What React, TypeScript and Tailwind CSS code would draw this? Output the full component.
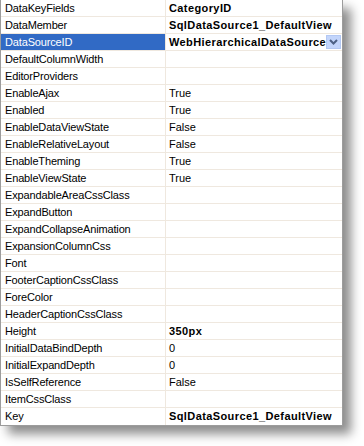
const rows: { name: string; value?: string; bold?: boolean }[] = [
  { name: "DataKeyFields", value: "CategoryID", bold: true },
  { name: "DataMember", value: "SqlDataSource1_DefaultView", bold: true },
  { name: "DataSourceID", value: "WebHierarchicalDataSource1", bold: true },
  { name: "DefaultColumnWidth" },
  { name: "EditorProviders" },
  { name: "EnableAjax", value: "True" },
  { name: "Enabled", value: "True" },
  { name: "EnableDataViewState", value: "False" },
  { name: "EnableRelativeLayout", value: "False" },
  { name: "EnableTheming", value: "True" },
  { name: "EnableViewState", value: "True" },
  { name: "ExpandableAreaCssClass" },
  { name: "ExpandButton" },
  { name: "ExpandCollapseAnimation" },
  { name: "ExpansionColumnCss" },
  { name: "Font" },
  { name: "FooterCaptionCssClass" },
  { name: "ForeColor" },
  { name: "HeaderCaptionCssClass" },
  { name: "Height", value: "350px", bold: true },
  { name: "InitialDataBindDepth", value: "0" },
  { name: "InitialExpandDepth", value: "0" },
  { name: "IsSelfReference", value: "False" },
  { name: "ItemCssClass" },
  { name: "Key", value: "SqlDataSource1_DefaultView", bold: true },
];

const SELECTED = 2;

function DropButton() {
  return (
    <div className="absolute right-[1px] top-[1px] w-[15px] h-[14px] bg-[#c3d5fb] border border-[#b3c8f3] flex items-center justify-center">
      <svg width="9" height="6" viewBox="0 0 9 6">
        <path d="M1 1 L4.5 4.5 L8 1" fill="none" stroke="#4d6185" strokeWidth="2" />
      </svg>
    </div>
  );
}

export default function App() {
  return (
    <div className="w-[364px] h-[446px] bg-white overflow-hidden">
      <div
        className="w-[343px] bg-white border-l border-r border-b border-[#9c9c9c] shadow-[8px_8px_10px_rgba(0,0,0,0.45)]"
        style={{ fontFamily: '"Liberation Sans", Arial, sans-serif' }}
      >
        {rows.map((r, i) => (
          <div
            key={r.name}
            className={`grid grid-cols-[165px_1fr] h-[17px] text-[11px] leading-[16px] text-black ${
              i < rows.length - 1 ? "border-b border-[#efe8df]" : ""
            }`}
          >
            <div
              className={`pl-[4px] tracking-[-0.15px] border-r border-[#efe8df] whitespace-nowrap overflow-hidden ${
                i === SELECTED ? "bg-[#316ac5] text-white" : ""
              }`}
            >
              {r.name}
            </div>
            <div className="relative pl-[3px] whitespace-nowrap overflow-hidden">
              <span className={r.bold ? "font-bold tracking-[0.4px]" : ""}>{r.value}</span>
              {i === SELECTED && <DropButton />}
            </div>
          </div>
        ))}
      </div>
    </div>
  );
}
